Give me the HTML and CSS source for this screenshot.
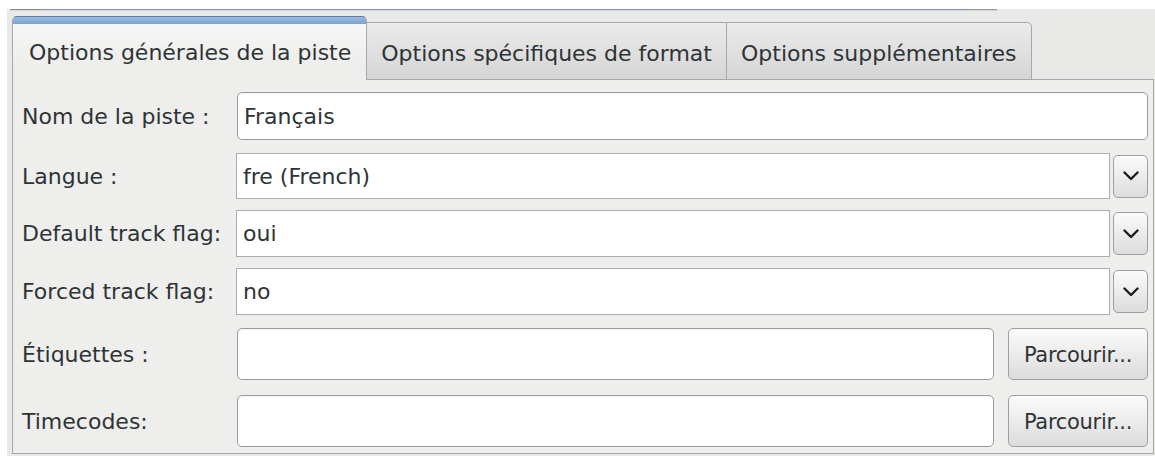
FILE: index.html
```html
<!DOCTYPE html>
<html lang="fr">
<head>
<meta charset="utf-8">
<title>Options de la piste</title>
<link rel="stylesheet" href="styles.css">
</head>
<body>
<div class="window">
  <div class="frame-edge"></div>
  <div class="tabbar">
    <div class="tab active">Options générales de la piste</div>
    <div class="tab">Options spécifiques de format</div>
    <div class="tab last">Options supplémentaires</div>
    <div class="tab-fill"></div>
  </div>
  <div class="page">
    <div class="row row-name">
      <span class="label">Nom de la piste :</span>
      <div class="entry">Français</div>
    </div>
    <div class="row row-combo row-lang">
      <span class="label">Langue :</span>
      <div class="combo-entry">fre (French)</div>
      <button class="combo-btn"><svg width="16" height="10" viewBox="0 0 16 10"><path d="M1.5 1.5 L8 8 L14.5 1.5" fill="none" stroke="#1c1c1c" stroke-width="2.4" stroke-linecap="round" stroke-linejoin="round"/></svg></button>
    </div>
    <div class="row row-combo row-default">
      <span class="label">Default track flag:</span>
      <div class="combo-entry">oui</div>
      <button class="combo-btn"><svg width="16" height="10" viewBox="0 0 16 10"><path d="M1.5 1.5 L8 8 L14.5 1.5" fill="none" stroke="#1c1c1c" stroke-width="2.4" stroke-linecap="round" stroke-linejoin="round"/></svg></button>
    </div>
    <div class="row row-combo row-forced">
      <span class="label">Forced track flag:</span>
      <div class="combo-entry">no</div>
      <button class="combo-btn"><svg width="16" height="10" viewBox="0 0 16 10"><path d="M1.5 1.5 L8 8 L14.5 1.5" fill="none" stroke="#1c1c1c" stroke-width="2.4" stroke-linecap="round" stroke-linejoin="round"/></svg></button>
    </div>
    <div class="row row-file row-tags">
      <span class="label">Étiquettes :</span>
      <div class="entry"></div>
      <button class="browse">Parcourir...</button>
    </div>
    <div class="row row-file row-timecodes">
      <span class="label">Timecodes:</span>
      <div class="entry"></div>
      <button class="browse">Parcourir...</button>
    </div>
  </div>
</div>
</body>
</html>
```

FILE: styles.css
```css
html, body {
  margin: 0;
  padding: 0;
  background: #ffffff;
}

body {
  width: 1155px;
  height: 456px;
  overflow: hidden;
  font-family: "DejaVu Sans", "Liberation Sans", sans-serif;
  font-size: 22px;
  color: #2e3436;
}

.window {
  margin: 9px 0 0 7px;
  height: 447px;
  background: #e9e9e8;
  padding: 0 1px 0 5px;
  box-sizing: border-box;
}

/* bottom edge of the list view sitting above the notebook */
.frame-edge {
  height: 1px;
  margin: 0 0 0 -2px;
  width: 987px;
  background: linear-gradient(to right, #8a8a8a 0 30px, #8196b3 30px 960px, #9a9a9a 960px);
  box-shadow: 0 1px 0 rgba(0, 0, 0, 0.08);
}

/* notebook tabs */
.tabbar {
  display: flex;
  align-items: flex-end;
  margin-top: 6px;
  height: 64px;
}

.tab {
  box-sizing: border-box;
  height: 58px;
  padding: 5px 14px 0;
  display: flex;
  align-items: center;
  white-space: nowrap;
  border: 1px solid #a7a7a7;
  border-left: none;
  background: linear-gradient(#ebebeb, #d5d5d5);
}

.tab.active {
  height: 64px;
  border: 1px solid #a7a7a7;
  border-bottom: none;
  border-top: 1px solid #5b7fad;
  border-radius: 5px 5px 0 0;
  padding: 8px 15px 0 16px;
  background:
    linear-gradient(#9bbbe0, #7fa4d1) top / 100% 7px no-repeat,
    linear-gradient(#f8f8f8, #eeeeec 70%);
}

.tab.last {
  border-top-right-radius: 5px;
}

.tab-fill {
  flex: 1;
  border-bottom: 1px solid #a7a7a7;
}

/* notebook page */
.page {
  box-sizing: border-box;
  height: 374px;
  background: #eeeeec;
  border: 1px solid #a7a7a7;
  border-top: none;
  padding: 12px 5px 0 9px;
}

.row {
  display: flex;
  align-items: center;
}

.label {
  width: 214px;
  flex: none;
  white-space: nowrap;
}

.row-name { height: 48px; }
.row-lang { height: 46px; margin-top: 13px; }
.row-default { height: 47px; margin-top: 11px; }
.row-forced { height: 47px; margin-top: 11px; }
.row-tags { height: 52px; margin-top: 13px; }
.row-timecodes { height: 52px; margin-top: 15px; }

.entry {
  flex: 1;
  align-self: stretch;
  box-sizing: border-box;
  margin-left: 1px;
  background: #ffffff;
  border: 1px solid #9b9b9b;
  border-radius: 5px;
  box-shadow: inset 0 1px 1px rgba(0, 0, 0, 0.06);
  padding: 0 6px;
  display: flex;
  align-items: center;
}

.combo-entry {
  flex: 1;
  align-self: stretch;
  box-sizing: border-box;
  background: #ffffff;
  border: 1px solid #adadad;
  padding: 0 6px;
  display: flex;
  align-items: center;
}

.combo-btn {
  flex: none;
  width: 35px;
  height: 43px;
  margin-left: 3px;
  padding: 0;
  border: 1px solid #9f9f9f;
  border-radius: 5px;
  background: linear-gradient(#fbfbfb, #dcdcdc);
  display: flex;
  align-items: center;
  justify-content: center;
}

.browse {
  flex: none;
  align-self: stretch;
  width: 140px;
  margin-left: 14px;
  padding: 2px 0 0;
  font: inherit;
  font-size: 21px;
  letter-spacing: -0.3px;
  color: #2e3436;
  border: 1px solid #9f9f9f;
  border-radius: 5px;
  background: linear-gradient(#fbfbfb, #dcdcdc);
}
```
